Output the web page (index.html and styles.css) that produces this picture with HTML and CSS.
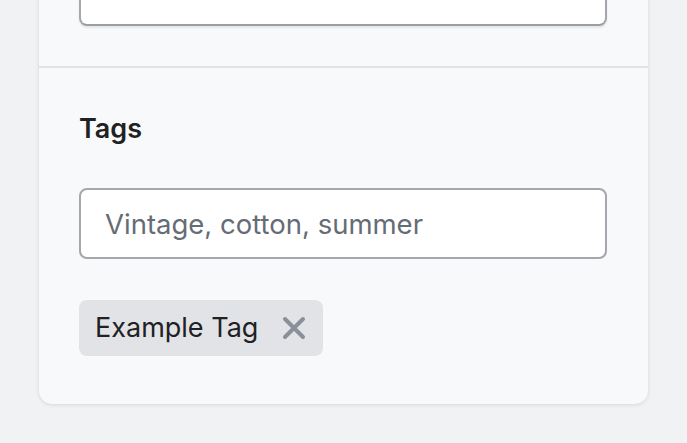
FILE: index.html
```html
<!DOCTYPE html>
<html lang="en">
<head>
<meta charset="utf-8">
<title>Tags</title>
<link rel="stylesheet" href="styles.css">
</head>
<body>
<div class="page">
  <div class="card">
    <div class="section section-top">
      <input class="field field-raised" type="text" placeholder="Enter a name">
    </div>
    <div class="divider"></div>
    <div class="section section-tags">
      <label class="label" for="tags">Tags</label>
      <input class="field" id="tags" type="text" placeholder="Vintage, cotton, summer">
      <div class="chips">
        <span class="chip">
          <span class="chip-text">Example Tag</span>
          <button class="chip-remove" type="button" aria-label="Remove Example Tag">
            <svg width="24" height="24" viewBox="0 0 24 24" aria-hidden="true">
              <path d="M3 3 L21 21 M21 3 L3 21" stroke="currentColor" stroke-width="4" stroke-linecap="round" fill="none"/>
            </svg>
          </button>
        </span>
      </div>
    </div>
  </div>
</div>
</body>
</html>
```

FILE: styles.css
```css
* { box-sizing: border-box; }

html, body {
  margin: 0;
  padding: 0;
  background: #f1f2f4;
  font-family: Inter, "Noto Sans", "Liberation Sans", sans-serif;
  color: #202124;
}

.page {
  padding: 0 39px 0 39px;
  height: 443px;
  overflow: hidden;
}

.card {
  width: 609px;
  margin-top: -86px;
  background: #f8f9fa;
  border-radius: 0 0 13px 13px;
  box-shadow: 0 1px 4px rgba(0, 0, 0, 0.10), 0 0 1px rgba(0, 0, 0, 0.08);
}

.section {
  padding: 40px 41px 0 40px;
}

.section-top {
  padding-top: 41px;
  padding-bottom: 40px;
}

.divider {
  height: 2px;
  background: #e0e2e5;
}

.section-tags {
  padding-bottom: 48px;
  display: flex;
  flex-direction: column;
}

.label {
  font-size: 27px;
  line-height: 32px;
  font-weight: 600;
  color: #1f2124;
  padding-top: 5px;
  margin-bottom: 43px;
}

.field {
  display: block;
  width: 100%;
  height: 71px;
  padding: 0 24px;
  border: 2px solid #a4a7ad;
  border-radius: 8px;
  background: #ffffff;
  font-family: inherit;
  font-size: 27.5px;
  color: #202124;
  outline: none;
}

.field::placeholder {
  color: #666c75;
}

.field-raised {
  padding-bottom: 8px;
  box-shadow: 0 2px 2px rgba(0, 0, 0, 0.08);
  border-bottom-color: #9a9ea5;
}

.field-raised::placeholder {
  color: #9aa0a8;
}

.chips {
  display: flex;
  margin-top: 41px;
}

.chip {
  display: inline-flex;
  align-items: center;
  height: 56px;
  padding: 0 17px 0 16px;
  background: #e2e3e6;
  border-radius: 8px;
  font-size: 27px;
  color: #202124;
}

.chip-text {
  line-height: 32px;
}

.chip-remove {
  display: flex;
  align-items: center;
  justify-content: center;
  margin-left: 24px;
  padding: 0;
  border: 0;
  background: none;
  color: #8a9099;
  width: 24px;
  height: 24px;
  cursor: pointer;
}
```
